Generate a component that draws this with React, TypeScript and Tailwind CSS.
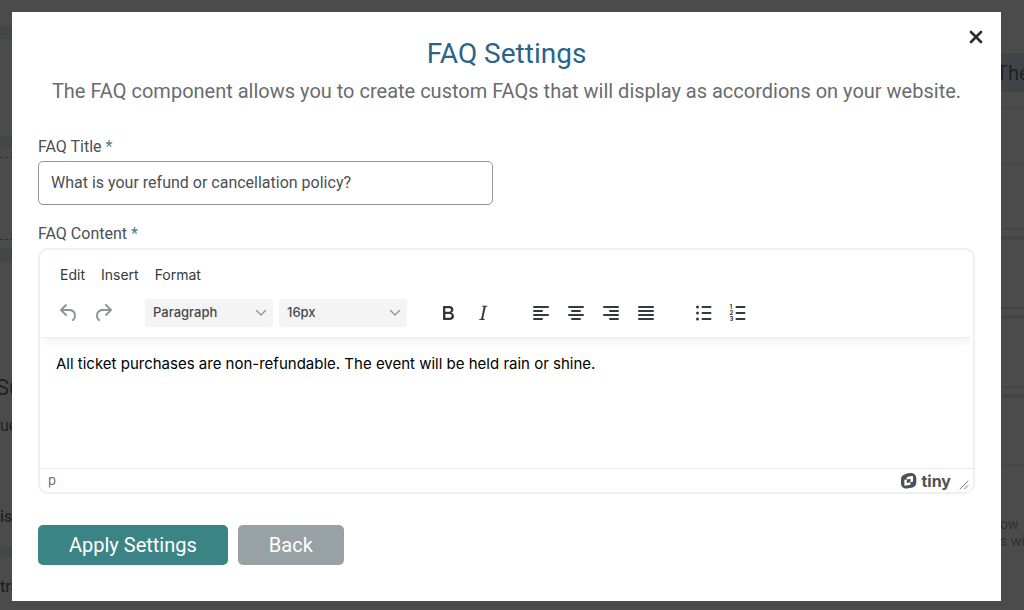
import React, { useState } from "react";
import clsx from "clsx";

const ALIGN_LINES: Record<string, [number, number][]> = {
  "Align left": [[5, 19], [5, 13], [5, 19], [5, 13]],
  "Align center": [[5, 19], [8, 16], [5, 19], [8, 16]],
  "Align right": [[5, 19], [11, 19], [5, 19], [11, 19]],
  Justify: [[5, 19], [5, 19], [5, 19], [5, 19]],
};

const UNDO =
  "M6.4 8H12c3.7 0 6.2 2 6.8 5.1.6 2.7-.4 5.6-2.3 6.8a1 1 0 0 1-1-1.8c1.1-.6 1.8-2.7 1.4-4.6-.5-2.1-2.1-3.5-4.9-3.5H6.4l3.3 3.3a1 1 0 1 1-1.4 1.4l-5-5a1 1 0 0 1 0-1.4l5-5a1 1 0 0 1 1.4 1.4L6.4 8Z";
const REDO =
  "M17.6 10H12c-2.8 0-4.4 1.4-4.9 3.5-.4 2 .3 4 1.4 4.6a1 1 0 1 1-1 1.8c-2-1.2-2.9-4.1-2.3-6.8.6-3 3-5.1 6.8-5.1h5.6l-3.3-3.3a1 1 0 1 1 1.4-1.4l5 5a1 1 0 0 1 0 1.4l-5 5a1 1 0 0 1-1.4-1.4l3.3-3.3Z";
const LOGO =
  "M10.143 0c2.608.015 5.186 2.178 5.186 5.331 0 0 .077 3.812-.084 4.87-.361 2.41-2.164 4.074-4.65 4.496-1.453.284-2.523.49-3.212.623-.373.071-.634.122-.785.152-.184.038-.997.145-1.35.145-2.732 0-5.21-2.04-5.248-5.33 0 0 0-3.514.03-4.442.093-2.4 1.758-4.342 4.926-4.963 0 0 3.875-.752 4.036-.782.368-.07.775-.1 1.15-.1Zm1.826 2.8L5.83 3.989v2.393l-2.455.475v5.968l6.137-1.189V9.243l2.456-.476V2.8ZM5.83 6.382l3.682-.713v3.574l-3.682.713V6.382Z";

function ToolButton({ label, muted, children }: { label: string; muted?: boolean; children: React.ReactNode }) {
  return (
    <button
      type="button"
      aria-label={label}
      title={label}
      className={clsx("flex h-7 w-[34px] items-center justify-center rounded", muted ? "text-[#8f9498]" : "text-[#35393d] hover:bg-gray-100")}
    >
      <svg viewBox="0 0 24 24" className="size-6 fill-current">{children}</svg>
    </button>
  );
}

function ToolSelect({ label, options }: { label: string; options: string[] }) {
  return (
    <div className="relative w-32">
      <select aria-label={label} className="h-7 w-full appearance-none rounded bg-[#f4f4f4] pl-2 text-[13px] font-medium text-[#45494d]">
        {options.map((option) => (
          <option key={option}>{option}</option>
        ))}
      </select>
      <svg viewBox="0 0 12 8" className="pointer-events-none absolute top-2.5 right-1.5 h-2 w-3 fill-none stroke-[#8f9498]" strokeWidth="1.4" strokeLinecap="round" strokeLinejoin="round">
        <path d="M1.5 1.5 6 6l4.5-4.5" />
      </svg>
    </div>
  );
}

function Label({ htmlFor, children }: { htmlFor: string; children: React.ReactNode }) {
  return (
    <label htmlFor={htmlFor} className="block text-[16px] leading-6 text-[#4b5055]">
      {children} <span className="text-[#37858a]">*</span>
    </label>
  );
}

// Page under the dimmed overlay
function PageBehind() {
  return (
    <div aria-hidden="true" className="flex h-screen justify-between overflow-hidden bg-[#4b4b4b] whitespace-nowrap text-[#202224]">
      <div className="w-7">
        <div className="mt-[26px] h-[13px] bg-[#454649]" />
        <div className="mt-[97px] h-[13px] bg-[#454649]" />
        <div className="mt-2 border-t border-dashed border-[#303030]" />
        <div className="mt-[81px] border-t border-dashed border-[#303030]" />
        <div className="mt-2 h-[14px] bg-[#454649]" />
        <div className="-ml-1 mt-[110px] text-[22px] leading-8">Su</div>
        <div className="mt-3 text-[16px] leading-5">ue</div>
        <div className="mt-[71px] text-[16px] leading-5 font-medium">is</div>
        <div className="mt-5 h-[10px] bg-[#454649]" />
        <div className="mt-5 text-[16px] leading-5 font-medium">tra</div>
      </div>
      <div className="w-7">
        <div className="mt-[53px] h-[39px] bg-[#424346] text-[20px] leading-10">The</div>
        <div className="mt-4 border-t border-[#424242]" />
        <div className="mt-[55px] border-t border-[#424242]" />
        {[0, 1, 2].map((row) => (
          <div key={row} className={row === 0 ? "mt-[63px]" : "mt-[67px]"}>
            <div className="h-[2px] bg-[#434343]" />
            <div className="mt-[6px] h-1 bg-[#434447]" />
          </div>
        ))}
        <div className="mt-[67px] border-t border-[#424242]" />
        <div className="mt-[50px] pl-1 text-[14px] leading-[17px] text-[#2f3032]">
          ow
          <br />
          s will
        </div>
      </div>
    </div>
  );
}

export default function App() {
  const [title, setTitle] = useState("What is your refund or cancellation policy?");
  const [content, setContent] = useState("All ticket purchases are non-refundable. The event will be held rain or shine.");

  return (
    <div className="font-['Roboto',sans-serif]">
      <PageBehind />

      <div className="fixed inset-0 overflow-auto pt-3 pr-[23px] pb-2 pl-3">
        <div role="dialog" aria-labelledby="dialog-title" className="relative bg-white px-[26px] pt-6 pb-9">
          <button type="button" aria-label="Close" className="absolute top-4 right-4 p-0.5 text-[#2b2e31]">
            <svg viewBox="0 0 14 14" className="size-[14px] fill-none stroke-current" strokeWidth="2.6" strokeLinecap="round">
              <path d="m2 2 10 10M12 2 2 12" />
            </svg>
          </button>

          <header className="text-center">
            <h1 id="dialog-title" className="text-[28px] leading-9 text-[#2c6488]">FAQ Settings</h1>
            <p className="mt-[5px] text-[20px] leading-7 text-[#696c6f]">
              The FAQ component allows you to create custom FAQs that will display as accordions on your website.
            </p>
          </header>

          <form className="mt-[30px]" onSubmit={(e) => e.preventDefault()}>
            <div className="grid grid-cols-2 gap-7">
              <div>
                <Label htmlFor="faq-title">FAQ Title</Label>
                <input
                  id="faq-title"
                  value={title}
                  onChange={(e) => setTitle(e.target.value)}
                  className="mt-0.5 block h-11 w-full rounded-[5px] border border-[#929598] px-3 pb-0.5 text-[16px] text-[#4b5055]"
                />
              </div>
            </div>

            <div className="mt-[17px]">
              <Label htmlFor="faq-content">FAQ Content</Label>
              <div className="mt-0.5 overflow-hidden rounded-[10px] border-2 border-[#f0f0f0] font-['Inter',sans-serif]">
                <div className="relative px-3 pt-3 pb-[10px] shadow-[0_2px_2px_-2px_rgba(34,47,62,0.12),0_8px_8px_-4px_rgba(34,47,62,0.07)]">
                  <div className="flex h-6 items-center gap-4 px-2 text-[14px] text-[#35393d]">
                    <button type="button">Edit</button>
                    <button type="button">Insert</button>
                    <button type="button">Format</button>
                  </div>
                  <div className="mt-[13px] flex items-center">
                    <div className="flex">
                      <ToolButton label="Undo" muted><path d={UNDO} /></ToolButton>
                      <ToolButton label="Redo" muted><path d={REDO} /></ToolButton>
                    </div>
                    <div className="ml-[25px] flex gap-1.5">
                      <ToolSelect label="Block" options={["Paragraph", "Heading 1", "Heading 2"]} />
                      <ToolSelect label="Font size" options={["16px", "18px", "24px"]} />
                    </div>
                    <div className="ml-6 flex gap-px">
                      <ToolButton label="Bold">
                        <path d="M7.8 19c-.3 0-.5 0-.6-.2l-.2-.5V5.7c0-.2 0-.4.2-.5l.6-.2h5c1.5 0 2.7.3 3.5 1 .7.6 1.1 1.4 1.1 2.5a3 3 0 0 1-.6 1.9c-.4.6-1 1-1.6 1.2.4.1.9.3 1.3.6s.8.7 1 1.2c.4.4.5 1 .5 1.6 0 1.3-.4 2.3-1.3 3-.8.7-2.1 1-3.8 1H7.8Zm5-8.3c.6 0 1.2-.1 1.6-.5.4-.3.6-.7.6-1.3 0-1.1-.8-1.7-2.3-1.7H9.3v3.5h3.4Zm.5 6c.7 0 1.3-.1 1.7-.4.4-.4.6-.9.6-1.5s-.2-1-.7-1.4c-.4-.3-1-.4-2-.4H9.4v3.8h4Z" />
                      </ToolButton>
                      <ToolButton label="Italic">
                        <path d="m16.7 4.7-.1.9h-.3c-.6 0-1 0-1.4.3-.3.3-.4.6-.5 1.1l-2.1 9.8v.6c0 .5.4.8 1.4.8h.2l-.2.8H8l.2-.8h.2c1.1 0 1.8-.5 2-1.5l2-9.8.1-.5c0-.6-.4-.8-1.4-.8h-.3l.2-.9h5.8Z" />
                      </ToolButton>
                    </div>
                    <div className="ml-6 flex gap-px">
                      {Object.entries(ALIGN_LINES).map(([label, lines]) => (
                        <ToolButton key={label} label={label}>
                          {lines.map(([from, to], i) => (
                            <path key={i} d={`M${from} ${6 + i * 4}H${to}`} stroke="currentColor" strokeWidth="2" strokeLinecap="round" />
                          ))}
                        </ToolButton>
                      ))}
                    </div>
                    <div className="ml-6 flex">
                      <ToolButton label="Bullet list">
                        {[6, 12, 18].map((y) => (
                          <g key={y}>
                            <circle cx="5.5" cy={y} r="1.5" />
                            <path d={`M10.5 ${y}h8`} stroke="currentColor" strokeWidth="2" strokeLinecap="round" />
                          </g>
                        ))}
                      </ToolButton>
                      <ToolButton label="Numbered list">
                        {[6, 12, 18].map((y, i) => (
                          <g key={y}>
                            <text x="3.5" y={y + 2} fontSize="6" fontWeight="700">{i + 1}</text>
                            <path d={`M10.5 ${y}h8`} stroke="currentColor" strokeWidth="2" strokeLinecap="round" />
                          </g>
                        ))}
                      </ToolButton>
                    </div>
                  </div>
                </div>

                <textarea
                  id="faq-content"
                  value={content}
                  onChange={(e) => setContent(e.target.value)}
                  className="block h-[131px] w-full resize-none px-4 pt-[15px] text-[15px] leading-6 text-black outline-none"
                />

                <div className="flex h-6 items-center border-t border-[#e8e8e8] pr-1 pl-2 text-[#4e5256]">
                  <span className="text-[13px] text-[#6a6e72]">p</span>
                  <a href="#tiny" className="ml-auto flex items-center gap-1 text-[16px] leading-5 font-bold">
                    <svg viewBox="0 0 16 16" className="size-4 fill-current" fillRule="evenodd">
                      <path d={LOGO} />
                    </svg>
                    tiny
                  </a>
                  <svg viewBox="0 0 10 10" className="mt-2 ml-2 size-[10px] fill-none stroke-[#7b7f83]" strokeLinecap="round">
                    <path d="M1 9 9 1M5.5 9 9 5.5" />
                  </svg>
                </div>
              </div>
            </div>

            <div className="mt-[31px] flex gap-[10px] text-[20px] text-white">
              <button type="submit" className="h-10 rounded-[5px] bg-[#3b8486] px-[31px]">Apply Settings</button>
              <button type="button" className="h-10 rounded-[5px] bg-[#98a1a3] px-[31px]">Back</button>
            </div>
          </form>
        </div>
      </div>
    </div>
  );
}
